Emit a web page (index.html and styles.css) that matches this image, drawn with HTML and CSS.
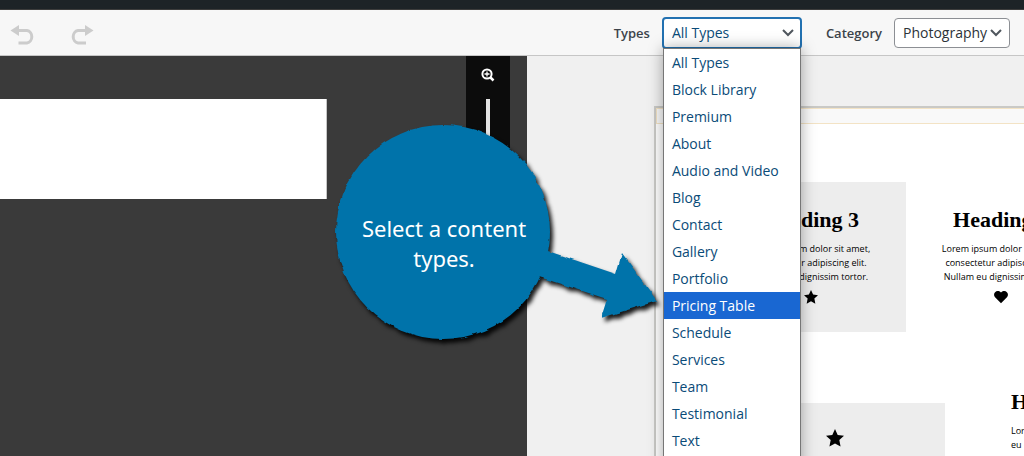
FILE: index.html
```html
<!DOCTYPE html>
<html lang="en">
<head>
<meta charset="utf-8">
<meta name="viewport" content="width=device-width, initial-scale=1">
<title>Template editor</title>
<link rel="stylesheet" href="styles.css">
</head>
<body>
<div class="app">
  <div class="admin-bar"></div>
  <header class="toolbar">
    <div class="history">
      <button class="icon-button" type="button" aria-label="Undo">
        <svg width="24" height="20" viewBox="0 0 24 20" aria-hidden="true"><path d="M.5 5.500 9 0v11z" fill="#ccc"/><path d="M8 5.500h9a5.500 6.300 0 0 1 0 12.500H8.500" fill="none" stroke="#ccc" stroke-width="3"/></svg>
      </button>
      <button class="icon-button" type="button" aria-label="Redo">
        <svg width="24" height="20" viewBox="0 0 24 20" aria-hidden="true"><path d="M23.500 5.500 15 0v11z" fill="#ccc"/><path d="M16 5.500H8a5.500 6.300 0 0 0 0 12.500h8" fill="none" stroke="#ccc" stroke-width="3"/></svg>
      </button>
    </div>
    <div class="filters">
      <div class="field">
        <label for="types">Types</label>
        <div class="select-wrap">
          <select id="types" class="select select-open"><option>All Types</option></select>
          <svg class="chevron" width="12" height="8" viewBox="0 0 12 8" aria-hidden="true"><path d="M1 1l5 5 5-5" fill="none" stroke="#50575e" stroke-width="2"/></svg>
          <ul class="menu" role="listbox" aria-label="Types">
            <li class="option" role="option">All Types</li>
            <li class="option" role="option">Block Library</li>
            <li class="option" role="option">Premium</li>
            <li class="option" role="option">About</li>
            <li class="option" role="option">Audio and Video</li>
            <li class="option" role="option">Blog</li>
            <li class="option" role="option">Contact</li>
            <li class="option" role="option">Gallery</li>
            <li class="option" role="option">Portfolio</li>
            <li class="option option-active" role="option" aria-selected="true">Pricing Table</li>
            <li class="option" role="option">Schedule</li>
            <li class="option" role="option">Services</li>
            <li class="option" role="option">Team</li>
            <li class="option" role="option">Testimonial</li>
            <li class="option" role="option">Text</li>
          </ul>
        </div>
      </div>
      <div class="field">
        <label for="category">Category</label>
        <div class="select-wrap">
          <select id="category" class="select select-category"><option>Photography</option></select>
          <svg class="chevron" width="12" height="8" viewBox="0 0 12 8" aria-hidden="true"><path d="M1 1l5 5 5-5" fill="none" stroke="#50575e" stroke-width="2"/></svg>
        </div>
      </div>
    </div>
  </header>

  <main class="workspace">
    <section class="editor">
      <div class="sheet"></div>
      <div class="zoom-rail">
        <button class="icon-button" type="button" aria-label="Zoom in">
          <svg width="14" height="14" viewBox="0 0 14 14" aria-hidden="true"><circle cx="6" cy="6" r="4.600" fill="none" stroke="#fff" stroke-width="2"/><path d="M6 3.500v5M3.500 6h5" stroke="#fff" stroke-width="1.300"/><path d="M9.500 9.500l3 3" stroke="#fff" stroke-width="2.500"/></svg>
        </button>
        <div class="zoom-track"></div>
      </div>
    </section>
    <section class="library">
      <div class="preview">
        <div class="preview-bar"></div>
        <div class="row">
          <article class="card card-shaded">
            <h3>Heading 3</h3>
            <p>Lorem ipsum dolor sit amet,<br>consectetur adipiscing elit.<br>Nullam eu dignissim tortor.</p>
            <svg width="14" height="14" viewBox="0 0 20 20" aria-hidden="true"><path d="M10 0l3 6.600 7 .9-5.200 4.800L16.200 19.500 10 16l-6.200 3.500 1.400-7.200L0 7.500l7-.9z"/></svg>
          </article>
          <article class="card">
            <h3>Heading 3</h3>
            <p>Lorem ipsum dolor sit amet,<br>consectetur adipiscing elit.<br>Nullam eu dignissim tortor.</p>
            <svg width="14" height="14" viewBox="0 0 20 20" aria-hidden="true"><path d="M10 19 1.500 10.500C-3 5 4-2.500 10 3.500c6-6 13 1.500 8.500 7z"/></svg>
          </article>
        </div>
        <div class="row row-wide">
          <div class="tile">
            <svg width="18" height="18" viewBox="0 0 20 20" aria-hidden="true"><path d="M10 0l3 6.600 7 .9-5.200 4.800L16.200 19.500 10 16l-6.200 3.500 1.400-7.200L0 7.500l7-.9z"/></svg>
          </div>
          <article class="blurb">
            <h3>Heading</h3>
            <p>Lorem ipsum dolor<br>eu dignissim tortor.</p>
          </article>
        </div>
      </div>
    </section>
  </main>

  <aside class="callout">
    <svg class="callout-shape" width="340" height="240" viewBox="0 0 340 240" aria-hidden="true">
      <defs>
        <filter id="rough" x="-5%" y="-5%" width="110%" height="110%">
          <feTurbulence type="fractalNoise" baseFrequency="0.12" numOctaves="1" seed="4" result="n"/>
          <feDisplacementMap in="SourceGraphic" in2="n" scale="4" xChannelSelector="R" yChannelSelector="G"/>
        </filter>
      </defs>
      <g fill="#0073aa" filter="url(#rough)">
        <circle cx="113" cy="112" r="107"/>
        <path d="M212 129l74 25 6-21 35 48-56 17 6-19-74-24z"/>
      </g>
    </svg>
    <p class="callout-text">Select a content<br>types.</p>
  </aside>
</div>
</body>
</html>
```
FILE: styles.css
```css
* { box-sizing: border-box; }

body {
  margin: 0;
  overflow: hidden;
  background: #f0f0f0;
  font-family: "Open Sans", "Noto Sans", sans-serif;
  font-size: 14px;
  color: #3c434a;
}

.app {
  position: relative;
  display: flex;
  flex-direction: column;
  height: 100vh;
  overflow: hidden;
}

.admin-bar { flex: none; height: 10px; background: #1d2327; border-bottom: 1px solid #3c3c3c; }

.toolbar {
  flex: none;
  display: flex;
  justify-content: space-between;
  align-items: center;
  height: 46px;
  padding: 0 14px 0 10px;
  background: #f7f7f7;
  border-bottom: 1px solid #c6c6c6;
}

.icon-button {
  display: flex;
  padding: 0;
  border: 0;
  background: none;
}

.history { display: flex; gap: 36px; padding-top: 4px; }

.filters { display: flex; gap: 24px; }
.field { display: flex; align-items: center; gap: 12px; }
.field label { font-size: 13px; font-weight: 600; }

.select-wrap { position: relative; }

.select {
  display: block;
  appearance: none;
  width: 140px;
  height: 32px;
  padding: 0 20px 0 8px;
  border: 1px solid #8c8f94;
  border-radius: 4px;
  background: #fff;
  font: inherit;
  color: #2c3338;
}

.select-category { width: 116px; height: 30px; }

.select-open {
  border: 2px solid #2271b1;
  color: #0a4b78;
  outline: none;
}

.chevron {
  position: absolute;
  right: 8px;
  top: 50%;
  margin-top: -4px;
  pointer-events: none;
}

.menu {
  position: absolute;
  z-index: 2;
  top: 31px;
  left: 1px;
  right: 1px;
  height: 480px;
  margin: 0;
  padding: 0;
  border: 1px solid #767676;
  background: #fff;
  box-shadow: 0 0 14px rgba(0, 0, 0, 0.35);
  list-style: none;
}

.option { padding: 0 8px; line-height: 27px; color: #0a4b78; }
.option-active { background: #1967d2; color: #fff; }

.workspace {
  flex: 1;
  display: grid;
  grid-template-columns: 527fr 497fr;
  min-height: 0;
}

.editor {
  display: flex;
  justify-content: space-between;
  padding-right: 17px;
  background: #3a3a3a;
}

.sheet {
  flex: 1;
  height: 100px;
  margin: 43px 139px 0 0;
  border-right: 1px solid #c6c6c6;
  background: #fff;
}

.zoom-rail {
  display: flex;
  flex-direction: column;
  align-items: center;
  gap: 17px;
  width: 44px;
  height: 260px;
  padding: 12px 0;
  background: #0c0c0c;
}

.zoom-track { flex: 1; width: 4px; background: #e4e4e4; }

.library { padding: 50px 0 0 127px; overflow: hidden; }

.preview {
  width: 600px;
  height: 100%;
  border: 2px solid #c9c9c6;
  border-bottom: 0;
  background: #fff;
}

.preview-bar {
  height: 16px;
  border: 1px solid #f3e3c5;
  background: #f9f9f9;
}

.row { display: flex; padding: 58px 0 0 60px; }

.card {
  display: flex;
  flex-direction: column;
  align-items: center;
  width: 190px;
  height: 150px;
  padding-top: 22px;
  text-align: center;
}

.card-shaded, .tile { background: #ededed; }

h3 {
  margin: 0;
  font: bold 22px/32px "Liberation Serif", serif;
  color: #000;
}

p { margin: 0; }

.card p, .blurb p { font-size: 9px; line-height: 14px; color: #000; }
.card p { padding: 6px 0; }

.row-wide { gap: 66px; padding: 71px 0 0 69px; }

.tile {
  display: flex;
  justify-content: center;
  width: 220px;
  height: 120px;
  padding-top: 26px;
}

.blurb { margin-top: -17px; }
.blurb p { padding-top: 6px; }

.callout { position: absolute; z-index: 3; left: 330px; top: 120px; }

.callout-shape {
  display: block;
  overflow: visible;
  filter: drop-shadow(3px 4px 2px rgba(0, 0, 0, 0.9));
}

.callout-text {
  position: absolute;
  top: 93px;
  left: 5px;
  width: 218px;
  font-family: "Noto Sans", sans-serif;
  font-size: 22px;
  line-height: 30px;
  text-align: center;
  color: #fff;
}
```
